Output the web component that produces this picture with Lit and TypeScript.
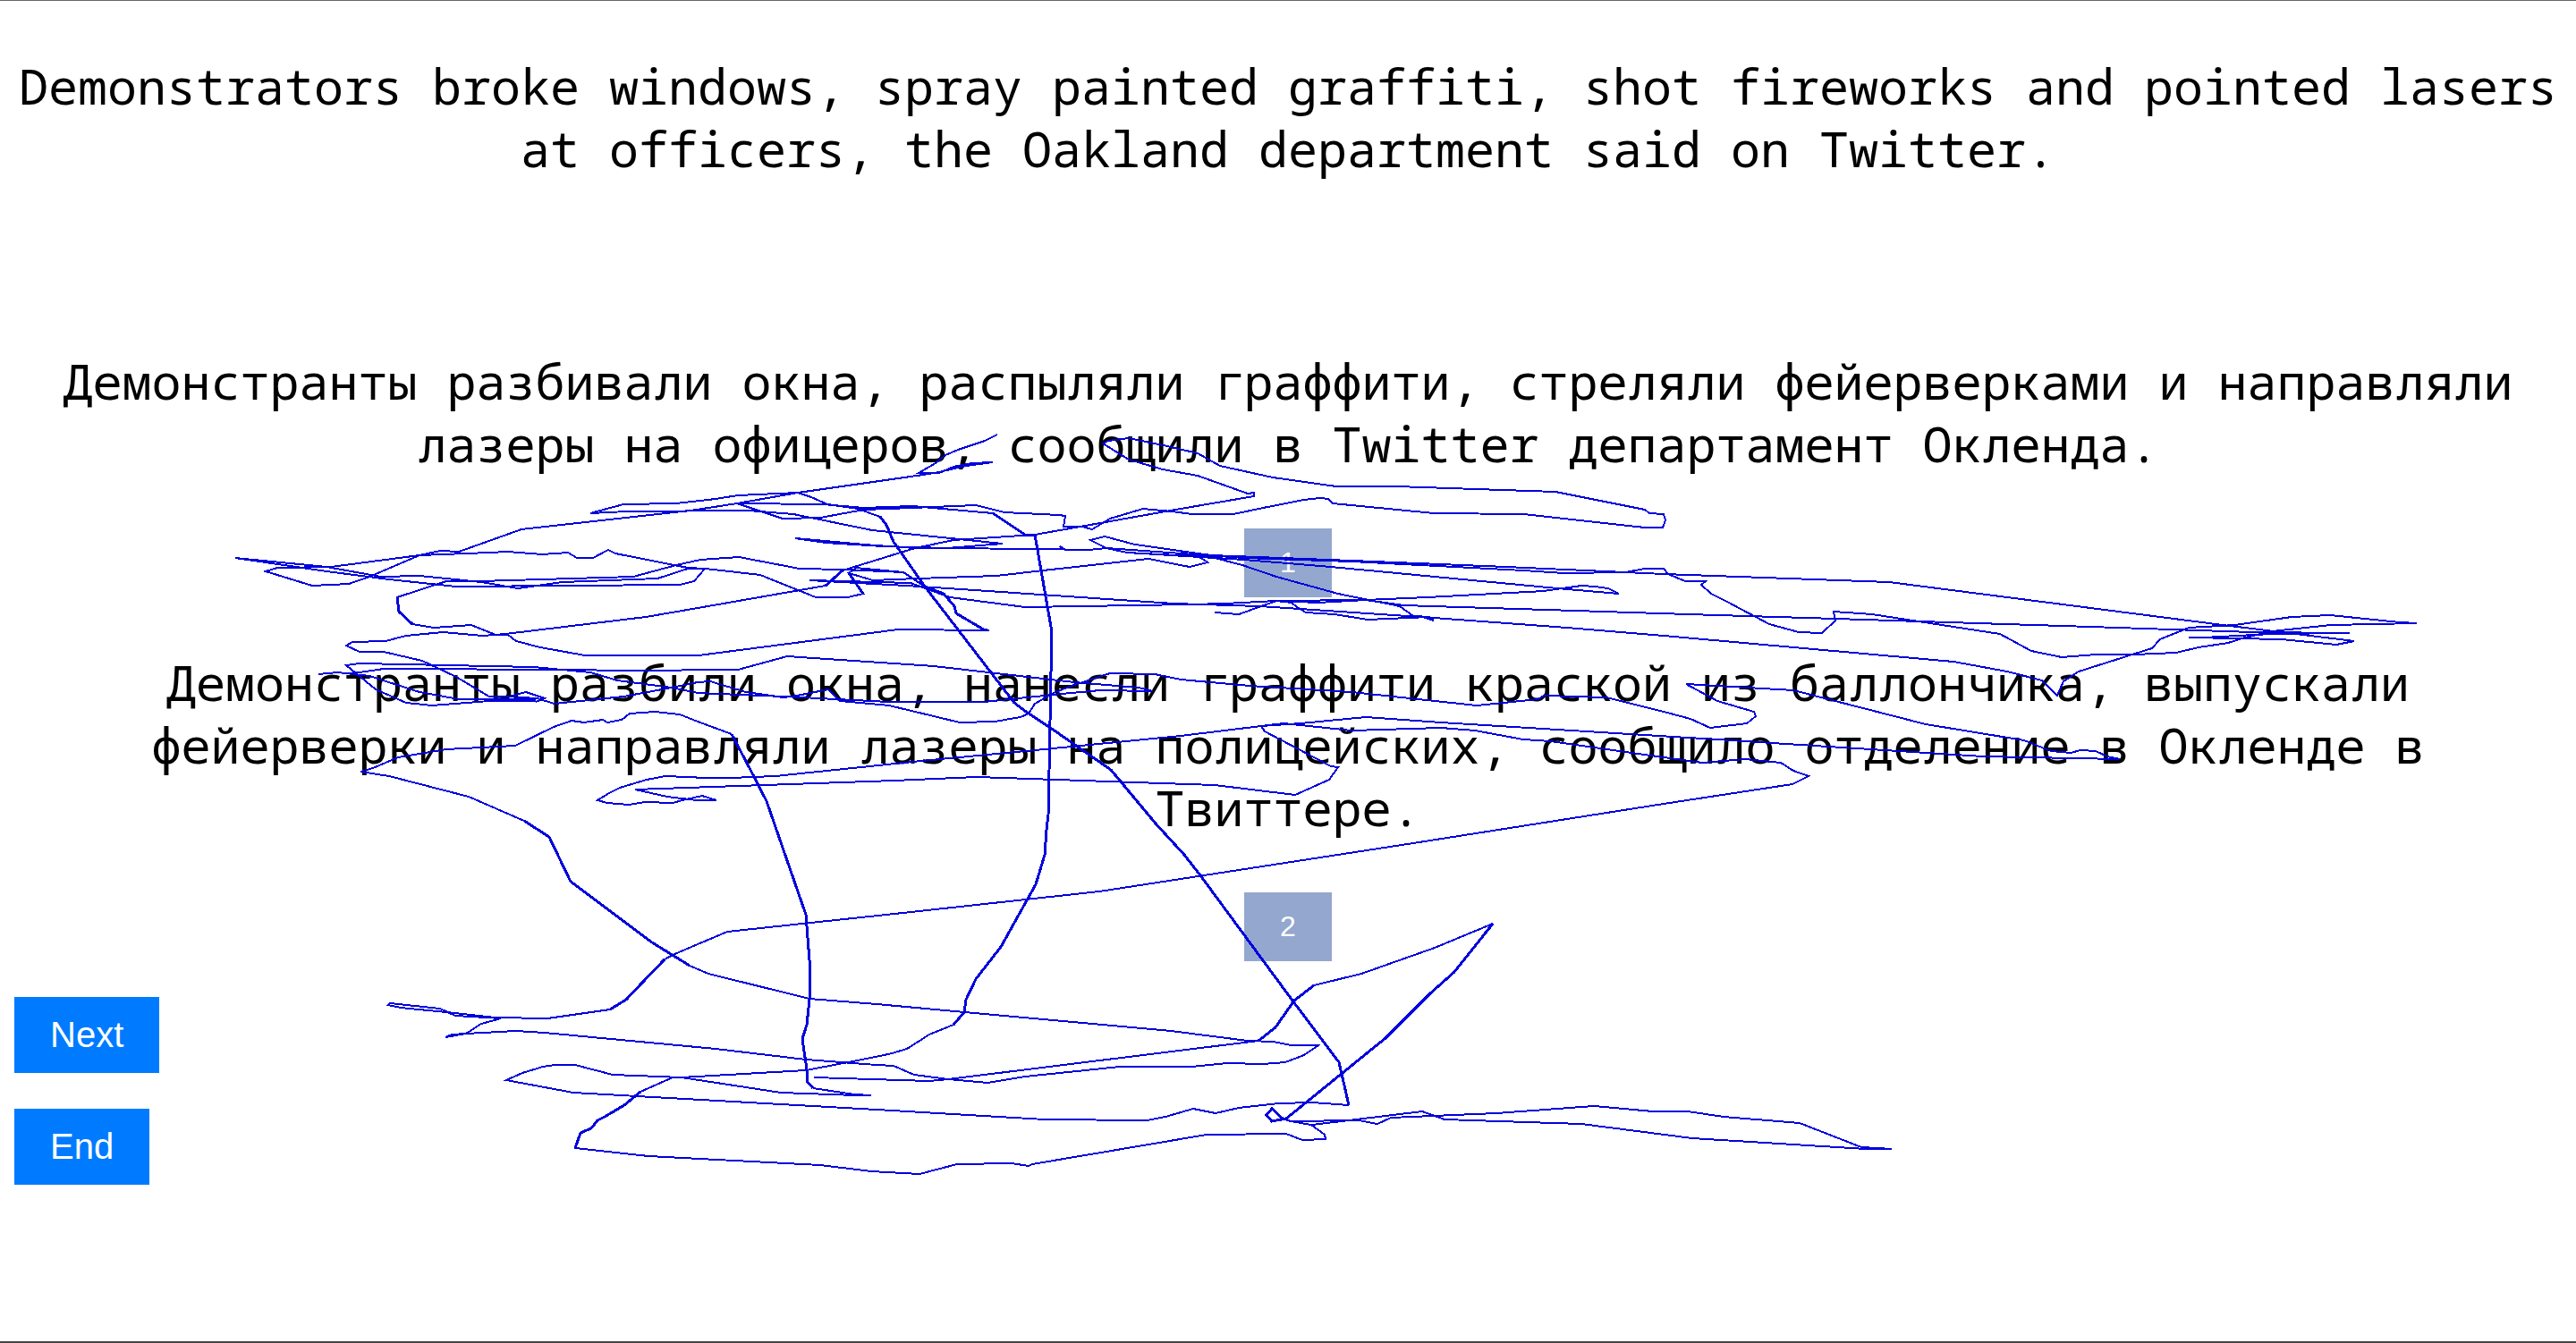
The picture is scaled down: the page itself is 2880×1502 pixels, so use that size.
import { LitElement, html, svg, css } from "lit";
import { customElement, state } from "lit/decorators.js";

const source =
  "Demonstrators broke windows, spray painted graffiti, shot fireworks and pointed lasers at officers, the Oakland department said on Twitter.";

const candidates = [
  "Демонстранты разбивали окна, распыляли граффити, стреляли фейерверками и направляли лазеры на офицеров, сообщили в Twitter департамент Окленда.",
  "Демонстранты разбили окна, нанесли граффити краской из баллончика, выпускали фейерверки и направляли лазеры на полицейских, сообщило отделение в Окленде в Твиттере.",
];

// Recorded gaze trail, in canvas coordinates.
const trail = [
  "1115,485 1101,492 1071,502 1057,508 1046,517 1027,528 1050,528 1066,521 1087,517 1110,516 1080,520 1050,527 1032,530 892,550 824,562 779,569 745,573 583,591 513,616 492,615 469,620 413,644 390,652 349,654 297,638 310,634 370,633 469,620 547,617 567,616 606,619 635,617 645,623 663,623 680,614 688,618 769,634 789,635 850,642 912,667 948,667 965,663 949,640 976,648 1026,646 1114,643 1166,637 1284,624 1330,633 1350,628 1343,623 1320,617",
  "949,640 957,634 1010,639 1034,655 1055,663 1067,677 1069,685 1098,702 1106,704 1004,703 781,732 654,732 604,723 577,716 568,709 554,709 527,698 485,701 461,697 446,683 444,667 499,649 536,649 708,644 756,631 783,625 826,622 894,635 942,636 1010,639",
  "263,623 304,627 365,633 426,644 469,643 538,650 579,657 629,650 735,646 769,635 788,635 776,649 760,653 510,655 435,647 365,638 263,623",
  "599,784 609,780 588,773 569,778 547,778 510,756 472,738 429,728 402,728 387,721 394,717 431,716 454,710 495,706 540,710 565,708 722,689 780,679 923,654 942,637 1023,612 1066,603 1157,597 1320,568 1402,554 1402,550 1395,551 1339,531 1300,524 1262,513 1233,495 1239,492 1262,489 1305,498 1339,506 1364,520 1423,533 1494,543 1561,543 1739,549 1839,569 1844,573 1860,574 1862,581 1859,589 1839,589 1703,574 1603,573 1490,562 1485,557 1476,556 1458,558 1412,567 1379,574 1333,574 1310,571 1278,568 1241,579 1221,591 1210,588 1189,588 1191,576 1184,575 1123,572 1091,564 1020,567 966,569 917,578 875,579 824,562 920,563 966,567 1020,565 1110,573 1146,597 1157,597",
  "1078,1131 1066,1145 1039,1156 1014,1172 997,1177 984,1180 943,1188 901,1196 762,1204 752,1204 716,1220 698,1235 676,1248 668,1252 661,1261 649,1266 643,1283 725,1292 917,1302 974,1309 1028,1312 1070,1301 1131,1300 1150,1303 1154,1301 1349,1268 1438,1267 1456,1274 1482,1273 1481,1268 1466,1257 1443,1253 1434,1250",
  "1669,1032 1604,1059 1522,1088 1469,1101 1447,1118 1426,1148 1407,1163 1060,1206 1039,1208 910,1204",
  "1443,1253 1519,1252 1540,1256 1555,1249 1673,1244 1782,1236 1848,1242 1887,1242 1927,1248 2012,1255 2081,1282 2115,1284 2086,1284 1892,1272 1768,1256 1615,1251 1590,1242 1467,1257",
  "1508,1235 1467,1232 1430,1233 1385,1238 1359,1244 1334,1239 1303,1248 1282,1252 1168,1251 980,1240 641,1221 566,1207 584,1199 607,1192 620,1190 643,1190 685,1201 762,1204 873,1221 957,1224 974,1224 955,1223 909,1216",
  "818,820 780,806 760,798 732,795 704,797 695,804 679,807 674,804 653,807 639,805 619,812 576,833 499,837 445,846 417,858 403,862 435,867 524,890 586,917",
  "771,1079 792,1088 905,1116 980,1122 1309,1152 1395,1163 1424,1164 1443,1168 1474,1168 1458,1179 1437,1187 1412,1189 1372,1188 1332,1192 1252,1192 1146,1203 1104,1210 1060,1206 1022,1201 999,1191 980,1190 901,1184 800,1172 609,1154 577,1152 521,1155 498,1159 505,1156 521,1155 538,1144 560,1138 509,1135 492,1127 436,1121 434,1123 448,1126 509,1132 553,1137 612,1138 682,1128 700,1117 718,1098 743,1072 752,1067 813,1041 1000,1021 1229,996 1580,942 1860,898 2004,876 2022,867 2005,861 1991,852 1951,848 1903,852 1860,846 1733,828 1703,826 1649,816 1611,813 1511,816 1454,810 1435,808 1410,811 1320,822 1157,838 1030,850 867,867 816,869 790,869 744,867 723,871 693,880 681,886 668,894 679,897 703,899 721,896 752,897 767,893 785,889 801,894 779,894 746,890 710,882 1000,872 1092,868 1358,877 1448,888 1486,871 1496,857 1488,856 1414,817 1410,811 1454,808 1527,801 1611,807 1741,815 1920,826 1997,831 2217,845 2370,848 2356,845 2343,839 2326,838 2315,841 2293,839 2263,827 2153,809 2005,771 1885,764 1920,783 1961,795 1963,800 1953,808 1912,813 1890,803 1860,795 1796,779 1726,777 1720,781 1651,788 1511,773 1397,766 1320,759 1291,753 1241,752 1201,765 1180,773 1157,786 1150,797 1141,801 1112,806 1073,807 994,788 939,783 926,770 891,777 876,779 834,773 794,761 780,762 751,768 697,778 620,786 600,780 569,778",
  "356,753 378,751 386,752 413,755 469,773 513,781 599,781",
  "386,752 402,751 429,747 633,748 701,749 825,748 880,733 1044,744 1201,762 1273,768 1289,772 1230,771 1187,775 1100,784 994,784 876,778 780,774 751,768 690,760 660,751 597,745 402,741 387,743 420,770 454,785 483,788 547,783 599,783",
  "889,601 923,606 987,610 1059,612 1121,607 975,592 887,574 837,570 701,571 660,573 697,563 756,562 800,557 825,553 892,550 907,555 925,563 959,568 984,577 991,586",
  "889,601 966,608 1023,612 1187,613 1185,610 1191,614 1217,614 1237,612 1391,623 1511,627 1703,637 1749,640 1817,639 1839,635 1860,635 1865,641 1884,649 1907,649 1902,653 1913,663 1931,672 1978,697 2011,706 2037,707 2052,693 2050,683 2093,686 2236,708 2271,727 2305,734 2343,731 2387,731 2433,729 2458,723 2491,718 2510,712 2540,705 2606,698 2702,696 2683,695 2605,687 2562,689 2499,698 2447,701 2415,714 2406,724 2324,750 2307,761 2300,777 2283,760 2244,750 2184,739 1860,710 1752,701 1603,690 1408,677 1312,674 1030,655 959,651 905,648 1018,651 1062,667 1146,678 1330,675 1370,674 1427,671 1527,670 1569,676 1920,687 2052,691 2337,700 2518,706 2627,707 2540,708 2463,712 2447,712 2551,714 2612,720 2632,716 2526,703 2485,698 2112,650 1860,641 1817,639 1684,633 1511,626 1354,620 1269,608 1235,599 1219,603 1237,612 1260,617 1391,625 1488,633 1741,657 1810,663 1798,657 1783,655 1768,654 1726,660 1596,667 1527,670 1473,673 1427,671 1410,677 1385,686 1358,684",
  "1260,617 1354,622 1389,631 1427,644 1496,663 1565,677 1580,688 1588,688 1603,693 1598,689 1529,692 1492,686 1460,684 1450,678 1444,673 1427,671",
];

// Steep and fast movements, drawn a little heavier.
const sweeps = [
  "984,577 991,586 999,605 1034,655 1134,785 1150,797 1173,812 1242,860 1292,920 1324,955 1342,978 1445,1118 1497,1187 1508,1235",
  "1434,1250 1422,1239 1416,1246 1422,1253 1438,1250 1549,1160 1599,1110 1626,1086 1669,1032",
  "586,917 614,935 638,985 729,1053 771,1079",
  "1110,573 1146,597 1157,597 1168,660 1175,700 1175,750 1173,860 1172,910 1170,927 1168,955 1158,988 1119,1058 1091,1094 1080,1117 1078,1131 1066,1145",
  "909,1216 902,1208 902,1195 897,1161 902,1145 905,1117 905,1073 901,1022 857,895 839,860 818,820",
  "716,1220 698,1235 676,1248 668,1252 661,1261 649,1266 643,1283",
  "682,1128 700,1117 718,1098 743,1072",
  "1469,1101 1447,1118 1426,1148 1407,1163",
  "1034,655 1055,663 1067,677 1069,685 1098,702",
  "949,640 965,663",
  "923,654 942,637",
  "461,697 446,683 444,667",
];

const line = (points: string) => svg`<polyline points=${points}></polyline>`;

@customElement("app-root")
export class AppRoot extends LitElement {
  @state() private choice = 0;

  static styles = css`
    :host {
      display: block;
      position: relative;
      box-sizing: border-box;
      min-height: 100vh;
      padding: 0 16px;
      border-top: 1px solid #666;
      border-bottom: 2px solid #444;
      background: #fff;
      color: #000;
      font-family: "Liberation Sans", Arial, sans-serif;
    }
    .sentences {
      display: flex;
      flex-direction: column;
      align-items: center;
      gap: 60px;
      padding: 60px 0 40px;
    }
    .text {
      margin: 0;
      font: 55px/70px "Noto Sans Mono", "DejaVu Sans Mono", monospace;
      text-align: center;
    }
    .source {
      margin-bottom: 130px;
    }
    button {
      margin: 0;
      border: 0;
      border-radius: 0;
      padding: 20px 40px;
      color: #fff;
      font-family: inherit;
    }
    .pick {
      background: #93a7cf;
      font-size: 32px;
      line-height: 37px;
    }
    .actions {
      display: flex;
      flex-direction: column;
      align-items: flex-start;
      gap: 40px;
    }
    .action {
      background: #007bff;
      font-size: 40px;
      line-height: 45px;
    }
    .trail {
      position: absolute;
      inset: 0;
      width: 100%;
      height: 100%;
      pointer-events: none;
      fill: none;
      stroke: #0000dc;
      shape-rendering: crispEdges;
    }
    .line {
      stroke-width: 2;
    }
    .sweep {
      stroke-width: 3;
    }
  `;

  render() {
    return html`
      <main class="sentences">
        <p class="text source">${source}</p>
        ${candidates.map(
          (text, i) => html`
            <p class="text">${text}</p>
            <button
              class="pick"
              type="button"
              aria-pressed=${this.choice === i + 1}
              @click=${() => (this.choice = i + 1)}
            >${i + 1}</button>
          `
        )}
      </main>
      <nav class="actions">
        <button class="action" type="button">Next</button>
        <button class="action" type="button">End</button>
      </nav>
      <svg class="trail" viewBox="0 0 2880 1499" preserveAspectRatio="none" aria-hidden="true">
        <g class="line">${trail.map(line)}</g>
        <g class="sweep">${sweeps.map(line)}</g>
      </svg>
    `;
  }
}
